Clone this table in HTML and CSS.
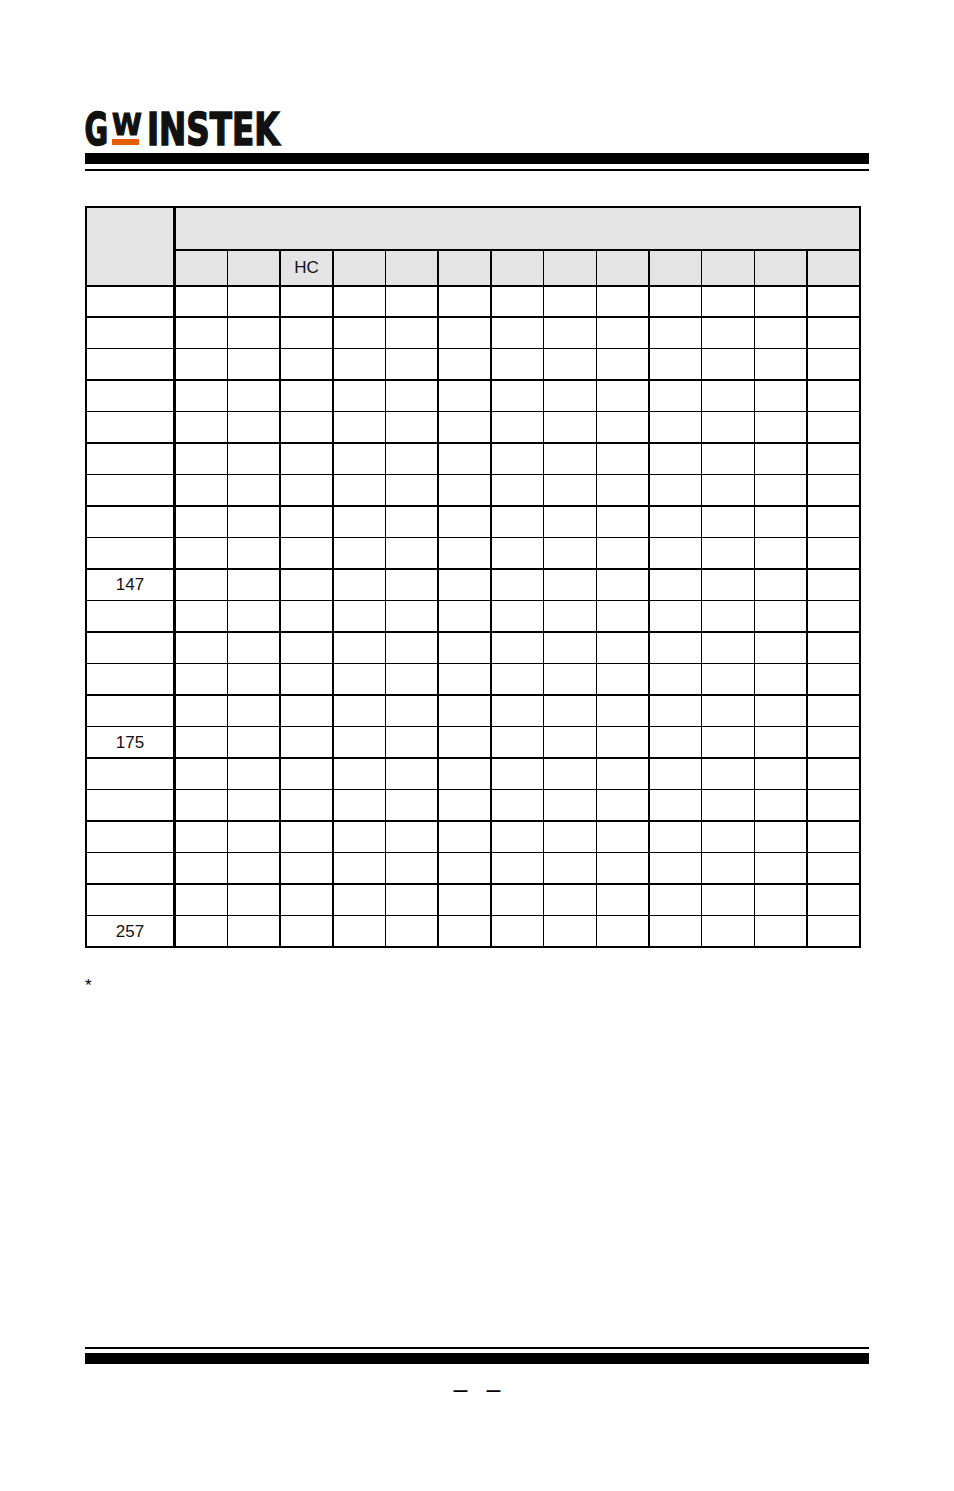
FILE: index.html
```html
<!DOCTYPE html>
<html lang="en">
<head>
<meta charset="utf-8">
<title>GW Instek table</title>
<link rel="stylesheet" href="styles.css">
</head>
<body>
<div class="page">
  <header class="head">
    <svg class="logo" width="200" height="46" viewBox="0 0 200 46" aria-label="GW INSTEK">
      <text class="lg" transform="translate(-0.5 45) scale(0.655 1)">G</text>
      <text class="lw" transform="translate(27 35) scale(0.9 1)">W</text>
      <rect x="27" y="39" width="27" height="6" fill="#e35d0a"/>
      <text class="lg" transform="translate(62 45) scale(0.74 1)">INSTEK</text>
    </svg>
    <div class="bar-thick"></div>
    <div class="bar-thin"></div>
  </header>

  <div class="grid">
    <div class="c k hd corner"></div>
    <div class="c hd group"></div>
    <div class="c hd"></div><div class="c hd"></div><div class="c hd">HC</div><div class="c hd"></div><div class="c hd"></div><div class="c hd"></div><div class="c hd"></div><div class="c hd"></div><div class="c hd"></div><div class="c hd"></div><div class="c hd"></div><div class="c hd"></div><div class="c hd"></div>

    <div class="c k"></div><div class="c"></div><div class="c"></div><div class="c"></div><div class="c"></div><div class="c"></div><div class="c"></div><div class="c"></div><div class="c"></div><div class="c"></div><div class="c"></div><div class="c"></div><div class="c"></div><div class="c"></div>
    <div class="c k"></div><div class="c"></div><div class="c"></div><div class="c"></div><div class="c"></div><div class="c"></div><div class="c"></div><div class="c"></div><div class="c"></div><div class="c"></div><div class="c"></div><div class="c"></div><div class="c"></div><div class="c"></div>
    <div class="c k"></div><div class="c"></div><div class="c"></div><div class="c"></div><div class="c"></div><div class="c"></div><div class="c"></div><div class="c"></div><div class="c"></div><div class="c"></div><div class="c"></div><div class="c"></div><div class="c"></div><div class="c"></div>
    <div class="c k"></div><div class="c"></div><div class="c"></div><div class="c"></div><div class="c"></div><div class="c"></div><div class="c"></div><div class="c"></div><div class="c"></div><div class="c"></div><div class="c"></div><div class="c"></div><div class="c"></div><div class="c"></div>
    <div class="c k"></div><div class="c"></div><div class="c"></div><div class="c"></div><div class="c"></div><div class="c"></div><div class="c"></div><div class="c"></div><div class="c"></div><div class="c"></div><div class="c"></div><div class="c"></div><div class="c"></div><div class="c"></div>
    <div class="c k"></div><div class="c"></div><div class="c"></div><div class="c"></div><div class="c"></div><div class="c"></div><div class="c"></div><div class="c"></div><div class="c"></div><div class="c"></div><div class="c"></div><div class="c"></div><div class="c"></div><div class="c"></div>
    <div class="c k"></div><div class="c"></div><div class="c"></div><div class="c"></div><div class="c"></div><div class="c"></div><div class="c"></div><div class="c"></div><div class="c"></div><div class="c"></div><div class="c"></div><div class="c"></div><div class="c"></div><div class="c"></div>
    <div class="c k"></div><div class="c"></div><div class="c"></div><div class="c"></div><div class="c"></div><div class="c"></div><div class="c"></div><div class="c"></div><div class="c"></div><div class="c"></div><div class="c"></div><div class="c"></div><div class="c"></div><div class="c"></div>
    <div class="c k"></div><div class="c"></div><div class="c"></div><div class="c"></div><div class="c"></div><div class="c"></div><div class="c"></div><div class="c"></div><div class="c"></div><div class="c"></div><div class="c"></div><div class="c"></div><div class="c"></div><div class="c"></div>
    <div class="c k">147</div><div class="c"></div><div class="c"></div><div class="c"></div><div class="c"></div><div class="c"></div><div class="c"></div><div class="c"></div><div class="c"></div><div class="c"></div><div class="c"></div><div class="c"></div><div class="c"></div><div class="c"></div>
    <div class="c k"></div><div class="c"></div><div class="c"></div><div class="c"></div><div class="c"></div><div class="c"></div><div class="c"></div><div class="c"></div><div class="c"></div><div class="c"></div><div class="c"></div><div class="c"></div><div class="c"></div><div class="c"></div>
    <div class="c k"></div><div class="c"></div><div class="c"></div><div class="c"></div><div class="c"></div><div class="c"></div><div class="c"></div><div class="c"></div><div class="c"></div><div class="c"></div><div class="c"></div><div class="c"></div><div class="c"></div><div class="c"></div>
    <div class="c k"></div><div class="c"></div><div class="c"></div><div class="c"></div><div class="c"></div><div class="c"></div><div class="c"></div><div class="c"></div><div class="c"></div><div class="c"></div><div class="c"></div><div class="c"></div><div class="c"></div><div class="c"></div>
    <div class="c k"></div><div class="c"></div><div class="c"></div><div class="c"></div><div class="c"></div><div class="c"></div><div class="c"></div><div class="c"></div><div class="c"></div><div class="c"></div><div class="c"></div><div class="c"></div><div class="c"></div><div class="c"></div>
    <div class="c k">175</div><div class="c"></div><div class="c"></div><div class="c"></div><div class="c"></div><div class="c"></div><div class="c"></div><div class="c"></div><div class="c"></div><div class="c"></div><div class="c"></div><div class="c"></div><div class="c"></div><div class="c"></div>
    <div class="c k"></div><div class="c"></div><div class="c"></div><div class="c"></div><div class="c"></div><div class="c"></div><div class="c"></div><div class="c"></div><div class="c"></div><div class="c"></div><div class="c"></div><div class="c"></div><div class="c"></div><div class="c"></div>
    <div class="c k"></div><div class="c"></div><div class="c"></div><div class="c"></div><div class="c"></div><div class="c"></div><div class="c"></div><div class="c"></div><div class="c"></div><div class="c"></div><div class="c"></div><div class="c"></div><div class="c"></div><div class="c"></div>
    <div class="c k"></div><div class="c"></div><div class="c"></div><div class="c"></div><div class="c"></div><div class="c"></div><div class="c"></div><div class="c"></div><div class="c"></div><div class="c"></div><div class="c"></div><div class="c"></div><div class="c"></div><div class="c"></div>
    <div class="c k"></div><div class="c"></div><div class="c"></div><div class="c"></div><div class="c"></div><div class="c"></div><div class="c"></div><div class="c"></div><div class="c"></div><div class="c"></div><div class="c"></div><div class="c"></div><div class="c"></div><div class="c"></div>
    <div class="c k"></div><div class="c"></div><div class="c"></div><div class="c"></div><div class="c"></div><div class="c"></div><div class="c"></div><div class="c"></div><div class="c"></div><div class="c"></div><div class="c"></div><div class="c"></div><div class="c"></div><div class="c"></div>
    <div class="c k">257</div><div class="c"></div><div class="c"></div><div class="c"></div><div class="c"></div><div class="c"></div><div class="c"></div><div class="c"></div><div class="c"></div><div class="c"></div><div class="c"></div><div class="c"></div><div class="c"></div><div class="c"></div>
  </div>

  <p class="note">*</p>

  <footer class="foot">
    <div class="bar-thin"></div>
    <div class="bar-thick foot-thick"></div>
    <div class="pagenum"><span>–</span><span>–</span></div>
  </footer>
</div>
</body>
</html>
```

FILE: styles.css
```css
* { box-sizing: border-box; }

html, body {
  margin: 0;
  padding: 0;
  background: #fff;
}

body {
  font-family: "Liberation Sans", Arial, sans-serif;
  color: #000;
}

.page {
  width: 954px;
  height: 1491px;
  padding: 100px 85px 87px;
  display: flex;
  flex-direction: column;
}

.logo {
  display: block;
  overflow: visible;
}

.logo .lg {
  font-family: "DejaVu Sans", sans-serif;
  font-weight: bold;
  font-size: 44px;
  fill: #111;
  stroke: #111;
  stroke-width: 1.6px;
  stroke-linejoin: miter;
}

.logo .lw {
  font-family: "DejaVu Sans", sans-serif;
  font-weight: bold;
  font-size: 30px;
  fill: #111;
  stroke: #111;
  stroke-width: 1.2px;
}

.bar-thick {
  height: 11px;
  margin-top: 7px;
  background: #000;
}

.bar-thin {
  height: 2px;
  margin-top: 5px;
  background: #000;
}

.grid {
  margin-top: 35px;
  width: 776px;
  height: 742px;
  display: grid;
  grid-template-columns: 87px repeat(13, 1fr);
  grid-template-rows: 41px 34.5px repeat(21, 1fr);
  gap: 1.5px;
  background: #000;
  border: 2px solid #000;
}

.c {
  background: #fff;
  display: flex;
  align-items: center;
  justify-content: center;
  font-size: 17px;
  line-height: 1;
  color: #111;
}

.c.k {
  border-right: 1px solid #000;
}

.c.hd {
  background: #e4e4e4;
}

.corner {
  grid-row: 1 / 3;
  grid-column: 1;
}

.group {
  grid-row: 1;
  grid-column: 2 / -1;
}

.note {
  margin: 28px 0 0;
  font-size: 17px;
  line-height: 20px;
}

.foot {
  margin-top: auto;
}

.foot .bar-thin {
  margin-top: 0;
}

.foot-thick {
  margin-top: 4px;
}

.pagenum {
  margin-top: 10px;
  height: 30px;
  display: flex;
  justify-content: center;
  gap: 19px;
  font-size: 25px;
  line-height: 30px;
}
```
